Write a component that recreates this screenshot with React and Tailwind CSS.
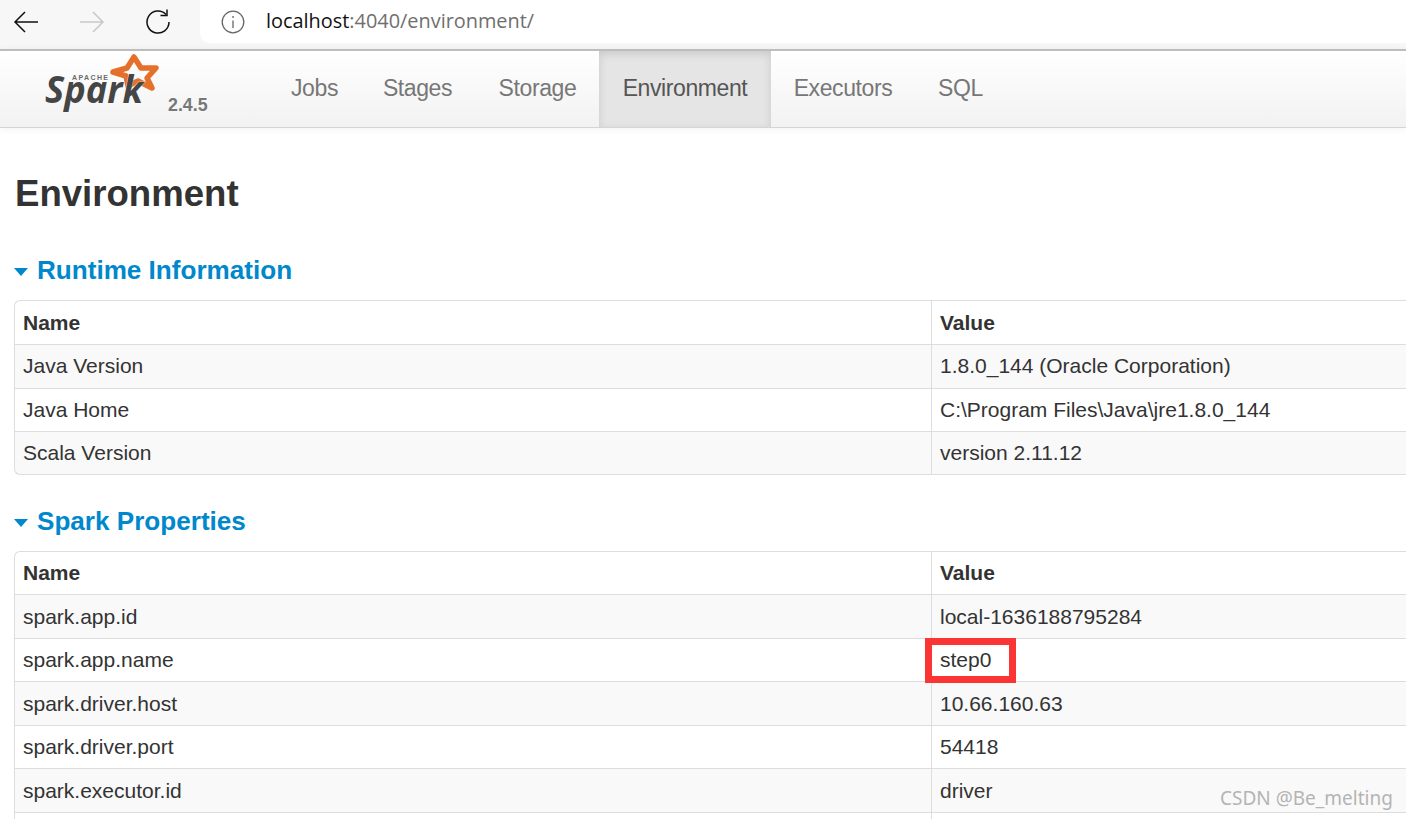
import React from "react";

const runtimeRows = [
  ["Java Version", "1.8.0_144 (Oracle Corporation)"],
  ["Java Home", "C:\\Program Files\\Java\\jre1.8.0_144"],
  ["Scala Version", "version 2.11.12"],
];

const sparkRows = [
  ["spark.app.id", "local-1636188795284"],
  ["spark.app.name", "step0"],
  ["spark.driver.host", "10.66.160.63"],
  ["spark.driver.port", "54418"],
  ["spark.executor.id", "driver"],
  ["", ""],
];

const tabs = [
  { label: "Jobs", w: "w-[89px]" },
  { label: "Stages", w: "w-[117px]" },
  { label: "Storage", w: "w-[123px]" },
  { label: "Environment", w: "w-[172px]", active: true },
  { label: "Executors", w: "w-[144px]" },
  { label: "SQL", w: "w-[91px]" },
];

const SparkLogo = () => (
  <svg width="132" height="66" viewBox="0 0 132 66" className="shrink-0">
    <path
      d="M102 6 L109 17 L124 17 L115 27 L120 37 L106 30 L96 35 L94 25 L81 21 L95 17 Z"
      fill="none"
      stroke="#e4702c"
      strokeWidth="5.5"
      strokeLinejoin="round"
    />
    <text x="40" y="29" fontFamily="'Liberation Sans', sans-serif" fontSize="7" fontWeight="700" letterSpacing="1.4" fill="#6a6a6a">
      APACHE
    </text>
    <text x="13" y="52" textLength="98" lengthAdjust="spacingAndGlyphs" fontFamily="'Open Sans', sans-serif" fontSize="38" fontWeight="700" fontStyle="italic" fill="#454545" stroke="#ffffff" strokeWidth="0.6" paintOrder="stroke">
      Spark
    </text>
  </svg>
);

const InfoTable = ({ rows, headH, rowH, mb }) => (
  <table className={`w-[1420px] table-fixed border-separate border-spacing-0 text-[21px] leading-[28px] text-[#333333] ${mb}`}>
    <colgroup>
      <col className="w-[917px]" />
      <col />
    </colgroup>
    <thead>
      <tr>
        <th className={`${headH} rounded-tl-[6px] border-t border-l border-[#dddddd] px-2 text-left font-bold`}>Name</th>
        <th className={`${headH} border-t border-l border-[#dddddd] px-2 text-left font-bold`}>Value</th>
      </tr>
    </thead>
    <tbody>
      {rows.map(([name, value], i) => (
        <tr key={name + i} className={i % 2 === 0 ? "bg-[#f9f9f9]" : "bg-white"}>
          <td className={`${rowH} border-t border-l border-[#dddddd] px-2 ${i === rows.length - 1 ? "border-b rounded-bl-[6px]" : ""}`}>{name}</td>
          <td className={`relative ${rowH} border-t border-l border-[#dddddd] px-2 ${i === rows.length - 1 ? "border-b" : ""}`}>
            {value}
            {value === "step0" && (
              <span className="absolute -top-[1px] -left-[7px] z-10 h-[45px] w-[91px] border-[7px] border-[#fb3434]" />
            )}
          </td>
        </tr>
      ))}
    </tbody>
  </table>
);

const SectionTitle = ({ children, mb }) => (
  <h4 className={`flex items-center gap-[9px] text-[26.1px] leading-[36px] font-bold text-[#0088cc] ${mb}`}>
    <svg width="14" height="8" viewBox="0 0 14 8" className="mt-[4px] shrink-0">
      <path d="M0 0 H14 L7 8 Z" fill="#0088cc" />
    </svg>
    {children}
  </h4>
);

export default function App() {
  return (
    <div className="relative h-[819px] w-[1406px] overflow-hidden bg-white font-['Liberation_Sans',Arial,sans-serif]">
      {/* browser chrome */}
      <div className="flex h-[49px] items-start bg-[#f7f7f7]">
        <div className="flex h-[43px] w-[200px] items-center text-black">
          <svg width="26" height="24" viewBox="0 0 26 24" className="ml-[13px]" fill="none" stroke="#111111" strokeWidth="1.5">
            <path d="M25 12 H2 M12 2 L2 12 L12 22" />
          </svg>
          <svg width="26" height="24" viewBox="0 0 26 24" className="ml-[40px]" fill="none" stroke="#c8c8c8" strokeWidth="1.5">
            <path d="M1 12 H24 M14 2 L24 12 L14 22" />
          </svg>
          <svg width="26" height="26" viewBox="0 0 26 26" className="ml-[40px]" fill="none" stroke="#111111" strokeWidth="1.5">
            <path d="M21 5.5 A11 11 0 1 0 24 13" />
            <path d="M22 0.5 V6.5 H15.5" />
          </svg>
        </div>
        <div className="flex h-[43px] flex-1 items-center rounded-bl-[10px] bg-white pl-[21px]">
          <svg width="24" height="24" viewBox="0 0 24 24" fill="none" stroke="#666666" strokeWidth="1.3">
            <circle cx="12" cy="12" r="10.8" />
            <path d="M12 10.5 V18 M12 6 V8" />
          </svg>
          <span className="ml-[21px] -mt-[2px] font-['Open_Sans',sans-serif] text-[19.9px] text-[#111111]">
            localhost<span className="text-[#6f6f6f]">:4040/environment/</span>
          </span>
        </div>
      </div>

      {/* spark navbar */}
      <div className="flex h-[79px] items-stretch border-t-[2px] border-b-[1px] border-t-[#bdbdbd] border-b-[#d5d5d5] bg-gradient-to-b from-white to-[#f2f2f2] shadow-[0_1px_8px_rgba(0,0,0,0.06)]">
        <div className="flex w-[270px] items-start pl-[32px]">
          <SparkLogo />
          <span className="mt-[41px] ml-[4px] text-[17.8px] font-bold text-[#777777]">2.4.5</span>
        </div>
        <div className="flex">
          {tabs.map((t) => (
            <div
              key={t.label}
              className={`flex h-[76px] items-center justify-center pb-[2px] text-[23px] tracking-[-0.4px] ${t.w} ${
                t.active ? "bg-[#e5e5e5] text-[#555555] shadow-[inset_0_3px_8px_rgba(0,0,0,0.125)]" : "text-[#777777]"
              }`}
            >
              {t.label}
            </div>
          ))}
        </div>
      </div>

      {/* page content */}
      <div className="px-[14px]">
        <h3 className="mt-[43px] mb-[35px] pl-[1px] text-[36.6px] leading-[46px] font-bold text-[#333333]">Environment</h3>
        <SectionTitle mb="mb-[12px]">Runtime Information</SectionTitle>
        <InfoTable rows={runtimeRows} headH="h-[44px]" rowH="h-[43.67px]" mb="mb-[28.5px]" />
        <SectionTitle mb="mb-[12px]">Spark Properties</SectionTitle>
        <InfoTable rows={sparkRows} headH="h-[43px]" rowH="h-[43.5px]" />
      </div>

      <div className="absolute top-[784px] left-[1220px] font-['Noto_Sans',sans-serif] text-[19px] leading-[28px] text-[#b4b4b4]">
        CSDN @Be_melting
      </div>
    </div>
  );
}
